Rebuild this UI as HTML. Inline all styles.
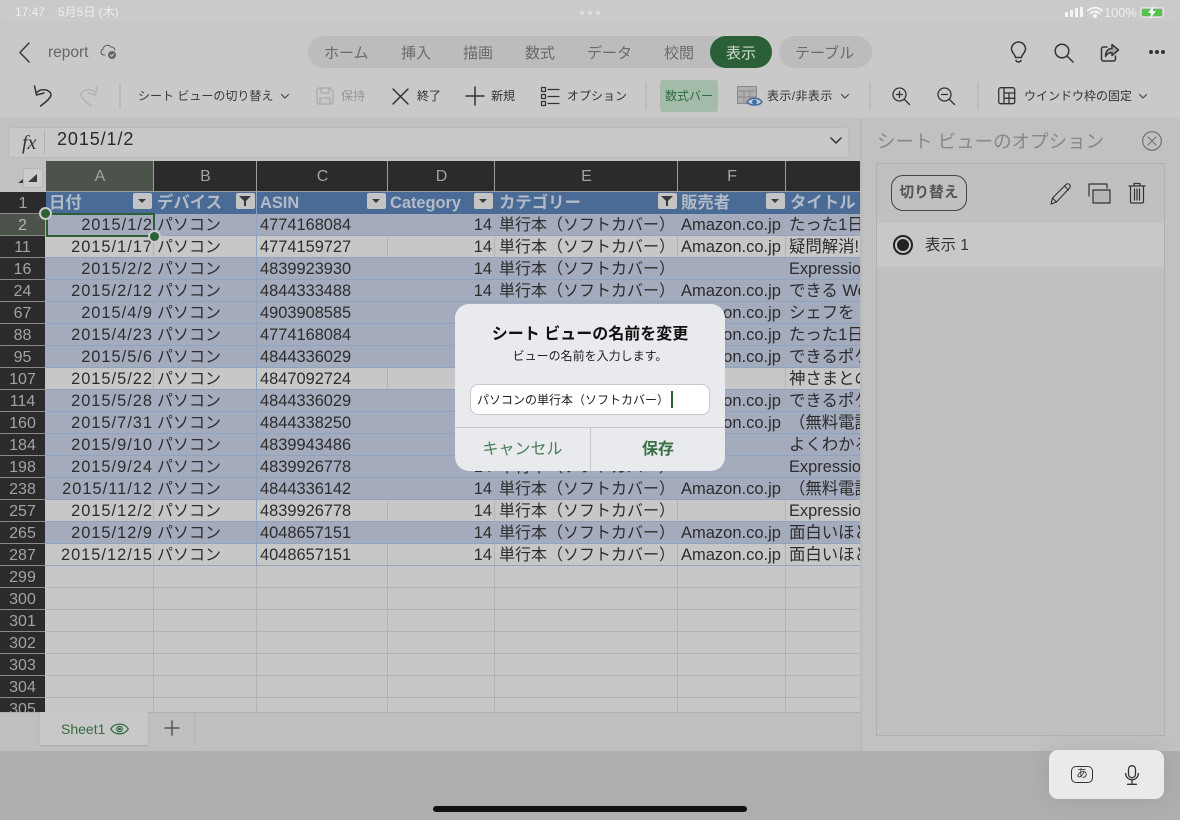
<!DOCTYPE html>
<html lang="ja"><head><meta charset="utf-8"><title>report</title>
<style>
*{box-sizing:border-box}
html,body{margin:0;padding:0}
body{width:1180px;height:820px;overflow:hidden;position:relative;background:#c9c9c9;font-family:"Liberation Sans","Noto Sans CJK JP",sans-serif;color:#2a2a2a}
.a{position:absolute;white-space:nowrap}
svg{position:absolute;overflow:visible;fill:none;stroke:#2e2e2e;stroke-width:1.5;stroke-linecap:round;stroke-linejoin:round}
.tab{position:absolute;top:45px;font-size:15px;color:#6a6a6a;line-height:17px;white-space:nowrap}
.tb{position:absolute;top:88px;font-size:12px;line-height:17px;color:#333;white-space:nowrap}
.vs{position:absolute;top:83px;width:1.5px;height:26px;background:#bbb}
.ch{position:absolute;top:161px;height:30px;background:#2b2b2b;color:#a3a3a3;font-size:16px;line-height:32px;text-align:center;border-right:1px solid #9c9c9c;padding-left:1px}
.r{position:absolute;left:0;width:860px;height:22px;font-size:16px;line-height:21px;border-bottom:1px solid #8ea3c0;color:#2d2d2d}
.r>*{position:absolute;top:1px;height:21px;white-space:nowrap;overflow:hidden;font-style:normal}
.r>:nth-child(1){left:0;top:0;width:45px;background:#2b2b2b;color:#a3a3a3;text-align:center;height:22px;line-height:23px;border-bottom:1px solid #8a8a8a}
.r>:nth-child(2){left:46px;width:107px;text-align:right;padding-right:0;font-size:16.4px;letter-spacing:1px}
.r>:nth-child(3){left:157px;width:99px}
.r>:nth-child(4){left:260px;width:127px;font-size:16.4px}
.r>:nth-child(5){left:388px;width:104px;text-align:right;font-size:16.4px}
.r>:nth-child(6){left:499px;width:178px}
.r>:nth-child(7){left:681px;width:104px;font-size:16.5px}
.r>:nth-child(8){left:789px;width:71px;font-size:16.4px}
.b{background:#a3abbd}
.l{background:#c7c7c7;border-bottom-color:#8ea3c0}
.l::before{content:"";position:absolute;top:0;left:153px;width:1px;height:21px;background:#b3b3b3;box-shadow:234px 0 #b3b3b3,341px 0 #b3b3b3,524px 0 #b3b3b3,632px 0 #b3b3b3}
.e{background:#c7c7c7;border-bottom-color:#b3b3b3}
.e::before{content:"";position:absolute;top:0;left:153px;width:1px;height:22px;background:#b3b3b3;box-shadow:103px 0 #b3b3b3,234px 0 #b3b3b3,341px 0 #b3b3b3,524px 0 #b3b3b3,632px 0 #b3b3b3}
.fb{position:absolute;top:193px;width:19px;height:16px;background:#c4c4c4;border-radius:2px}
.fb::after{content:"";position:absolute;left:5px;top:6px;border-left:4px solid transparent;border-right:4px solid transparent;border-top:4px solid #3a3a3a}
.fb.f::after{left:3px;top:3px;border-left:6px solid transparent;border-right:6px solid transparent;border-top:6px solid #3a3a3a}
.fb.f::before{content:"";position:absolute;left:8px;top:7px;width:2px;height:6px;background:#3a3a3a}
.ht{position:absolute;top:192px;height:22px;font-size:16.4px;line-height:22px;color:#b4bbc8;font-weight:bold;white-space:nowrap}
</style></head><body>

<!-- status bar -->
<div class="a" style="left:0;top:0;width:1180px;height:23px;background:#cacaca;border-bottom:1px dotted #c2c2c2"></div>
<div class="a" style="left:15px;top:5px;font-size:12px;line-height:15px;color:#eee">17:47</div>
<div class="a" style="left:58px;top:5px;font-size:12px;line-height:15px;color:#eee">5月5日 (木)</div>
<div class="a" style="left:580px;top:11px;width:4px;height:4px;border-radius:50%;background:#dedede;box-shadow:8px 0 #dedede,16px 0 #dedede"></div>
<div class="a" style="left:1065px;top:12px;width:3px;height:5px;background:#f4f4f4"></div>
<div class="a" style="left:1070px;top:10px;width:3px;height:7px;background:#f4f4f4"></div>
<div class="a" style="left:1075px;top:8px;width:3px;height:9px;background:#f4f4f4"></div>
<div class="a" style="left:1080px;top:7px;width:3px;height:10px;background:#f4f4f4"></div>
<svg style="left:1087px;top:6px;stroke:#f4f4f4;stroke-width:2" width="16" height="12"><path d="M1 4.500C5 .8 11 .8 15 4.500M3.500 7.300C6 5 10 5 12.500 7.300"/><circle cx="8" cy="10" r="1" fill="#f4f4f4"/></svg>
<div class="a" style="left:1104px;top:5px;font-size:12.800px;line-height:15px;color:#eee">100%</div>
<div class="a" style="left:1140px;top:7px;width:24px;height:11px;border:1px solid #e4e4e4;border-radius:3px;padding:1px"><div style="width:20px;height:7px;background:#58c04c;border-radius:1px"></div></div>
<svg style="left:1146px;top:6px;stroke:none" width="12" height="13"><path d="M7 0 2 7h3l-1 6 6-8H7z" fill="#f4f4f4"/></svg>

<!-- title row -->
<svg style="left:18px;top:42px;stroke:#3a3a3a" width="12" height="21"><path d="M11 1 2 10.500 11 20"/></svg>
<div class="a" style="left:48px;top:44px;font-size:15.500px;line-height:18px;color:#666">report</div>
<svg style="left:100px;top:44px;stroke:#5d5d5d;stroke-width:1" width="18" height="17"><path d="M5 11H4a3 3 0 0 1-1-5.800A4.500 4.500 0 0 1 11 3a4 4 0 0 1 4 3"/><circle cx="12" cy="11" r="4.500" fill="#666" stroke="#cbcbcb"/><path d="M10.300 11l1.300 1.300 2-2.300" stroke="#ccc"/></svg>

<div class="a" style="left:308px;top:36px;width:462px;height:32px;border-radius:16px;background:#bcbcbc"></div>
<div class="a" style="left:710px;top:36px;width:62px;height:32px;border-radius:16px;background:#2b6037"></div>
<div class="a" style="left:779px;top:36px;width:93px;height:32px;border-radius:16px;background:#bcbcbc"></div>
<div class="tab" style="left:324px">ホーム</div>
<div class="tab" style="left:401px">挿入</div>
<div class="tab" style="left:463px">描画</div>
<div class="tab" style="left:525px">数式</div>
<div class="tab" style="left:587px">データ</div>
<div class="tab" style="left:664px">校閲</div>
<div class="tab" style="left:726px;color:#cfdccf">表示</div>
<div class="tab" style="left:795px">テーブル</div>

<svg style="left:1010px;top:42px;stroke:#353535" width="17" height="21"><path d="M5.500 15.500C5 12 1.500 10.500 1.500 7a7 7 0 0 1 14 0c0 3.500-3.500 5-4 8.500zM6 18.500c.5 1 1 1.500 2.500 1.500s2-.5 2.500-1.500"/></svg>
<svg style="left:1054px;top:43px;stroke:#353535" width="20" height="20"><circle cx="8" cy="8" r="6.800"/><path d="M13 13l6 6"/></svg>
<svg style="left:1100px;top:43px;stroke:#353535" width="20" height="20"><path d="M7 4H3.500A2 2 0 0 0 1.500 6v10a2 2 0 0 0 2 2h10a2 2 0 0 0 2-2v-3"/><path d="M12 1.500 18.500 7 12 12.500V9.500c-3 0-5 1-6.500 4 0-5 2.500-8 6.500-8z" fill="#4a4a4a" fill-opacity=".25"/></svg>
<div class="a" style="left:1149px;top:50px;width:4px;height:4px;border-radius:50%;background:#333;box-shadow:6px 0 #333,12px 0 #333"></div>

<!-- toolbar -->
<svg style="left:33px;top:85px;stroke:#353535" width="20" height="22"><path d="M1.500 1 3.500 10 11 8"/><path d="M3.500 8C7 3.500 14 3.500 17.500 8 20 11.500 13 17 7.500 21"/></svg>
<svg style="left:79px;top:85px;stroke:#b3b3b3" width="20" height="22"><path d="M18.500 1 16.500 10 9 8"/><path d="M16.500 8C13 3.500 6 3.500 2.500 8 0 11.500 7 17 12.500 21"/></svg>
<div class="vs" style="left:119px"></div>
<div class="tb" style="left:138px;color:#3a3a3a">シート ビューの切り替え</div>
<svg style="left:281px;top:94px;stroke:#444;stroke-width:1.100" width="8" height="5"><path d="M.5.500 4 4 7.500.500"/></svg>
<svg style="left:316px;top:87px;stroke:#aaa;stroke-width:1.300" width="18" height="18"><path d="M1 3a2 2 0 0 1 2-2h11l3 3v11a2 2 0 0 1-2 2H3a2 2 0 0 1-2-2z"/><path d="M5 1v5h8V1M4 17v-6h10v6"/></svg>
<div class="tb" style="left:341px;color:#979797">保持</div>
<svg style="left:392px;top:88px;stroke:#333" width="17" height="17"><path d="M1 1l15 15M16 1 1 16"/></svg>
<div class="tb" style="left:417px">終了</div>
<svg style="left:466px;top:87px;stroke:#333" width="18" height="18"><path d="M9 0v18M0 9h18"/></svg>
<div class="tb" style="left:491px">新規</div>
<svg style="left:541px;top:87px;stroke:#333;stroke-width:1.200" width="19" height="19"><rect x=".5" y=".5" width="4" height="4"/><rect x=".5" y="7.500" width="4" height="4"/><rect x=".5" y="14.500" width="4" height="4"/><path d="M7 2.500h11M7 9.500h11M7 16.500h11"/></svg>
<div class="tb" style="left:567px">オプション</div>
<div class="vs" style="left:645px"></div>
<div class="a" style="left:660px;top:80px;width:58px;height:32px;background:#a3bcaa;border-radius:3px;font-size:12px;line-height:33px;text-align:center;color:#2f6c42">数式バー</div>
<svg style="left:737px;top:86px;stroke:#8a8a8a;stroke-width:1" width="26" height="21"><rect x=".5" y=".5" width="19" height="17" fill="#aeaeae"/><path d="M.5 5h19M7 5v13M13 5v13M.5 11h19"/><path d="M10 16c3-5 12-5 15 0-3 4-12 4-15 0z" fill="#cbcbcb" stroke="#3f6ea5" stroke-width="1.500"/><circle cx="17.500" cy="16" r="2.500" fill="#3f6ea5" stroke="none"/></svg>
<div class="tb" style="left:767px;letter-spacing:.4px">表示/非表示</div>
<svg style="left:841px;top:94px;stroke:#444;stroke-width:1.100" width="8" height="5"><path d="M.5.500 4 4 7.500.500"/></svg>
<div class="vs" style="left:869px"></div>
<svg style="left:892px;top:87px;stroke:#333;stroke-width:1.300" width="18" height="18"><circle cx="7.500" cy="7.500" r="6.500"/><path d="M12.500 12.500 17.500 17.500M7.500 4.500v6M4.500 7.500h6"/></svg>
<svg style="left:937px;top:87px;stroke:#333;stroke-width:1.300" width="18" height="18"><circle cx="7.500" cy="7.500" r="6.500"/><path d="M12.500 12.500 17.500 17.500M4.500 7.500h6"/></svg>
<div class="vs" style="left:977px"></div>
<svg style="left:998px;top:87px;stroke:#333;stroke-width:1.300" width="18" height="18"><rect x=".7" y=".7" width="16" height="16" rx="2"/><path d="M6 .7v16M6 6h10.700M11 6v10.700M6 11.300h10.700"/></svg>
<div class="tb" style="left:1024px">ウインドウ枠の固定</div>
<svg style="left:1139px;top:94px;stroke:#444;stroke-width:1.100" width="8" height="5"><path d="M.5.500 4 4 7.500.500"/></svg>

<!-- formula bar -->
<div class="a" style="left:0;top:118px;width:860px;height:43px;background:#c1c1c1"></div>
<div class="a" style="left:8px;top:127px;width:841px;height:31px;background:#c8c8c8;border:1px solid #bbb;border-radius:3px"></div>
<div class="a" style="left:22px;top:131px;font:italic 20px/24px 'Liberation Serif',serif;color:#333">fx</div>
<div class="a" style="left:44px;top:130px;width:1px;height:25px;background:#b3b3b3"></div>
<div class="a" style="left:57px;top:128px;font-size:18px;line-height:22px;letter-spacing:.9px;color:#2a2a2a">2015/1/2</div>
<svg style="left:830px;top:137px;stroke:#333" width="12" height="8"><path d="M1 1l5 5 5-5"/></svg>

<!-- grid head -->
<div class="a" style="left:0;top:161px;width:46px;height:31px;background:#c2c2c2"></div>
<div class="a" style="left:23px;top:168px;width:20px;height:20px;background:#cbcbcb;border:1px solid #b6b6b6;border-radius:2px"></div>
<div class="a" style="left:28px;top:174px;border-left:9px solid transparent;border-bottom:8px solid #3a3a3a"></div>
<div class="a" style="left:18px;top:179px;border-left:5px solid transparent;border-bottom:4px solid #3a3a3a"></div>
<div class="ch" style="left:46px;width:108px;background:#4b534a">A</div>
<div class="ch" style="left:154px;width:103px">B</div>
<div class="ch" style="left:257px;width:131px">C</div>
<div class="ch" style="left:388px;width:107px">D</div>
<div class="ch" style="left:495px;width:183px">E</div>
<div class="ch" style="left:678px;width:108px">F</div>
<div class="ch" style="left:786px;width:74px;border-right:0"></div>
<div class="a" style="left:46px;top:191px;width:814px;height:1px;background:#9c9c9c"></div>

<!-- rows -->
<div class="a" style="left:0;top:192px;width:46px;height:22px;background:#2b2b2b;color:#a3a3a3;font-size:16px;line-height:23px;text-align:center;border-bottom:1px solid #8a8a8a">1</div>
<div class="a" style="left:46px;top:192px;width:814px;height:22px;background:#4a6b96"></div>
<div class="ht" style="left:49px">日付</div>
<div class="ht" style="left:157px">デバイス</div>
<div class="ht" style="left:260px">ASIN</div>
<div class="ht" style="left:390px">Category</div>
<div class="ht" style="left:499px">カテゴリー</div>
<div class="ht" style="left:681px">販売者</div>
<div class="ht" style="left:790px">タイトル</div>
<div class="fb" style="left:133px"></div>
<div class="fb f" style="left:236px"></div>
<div class="fb" style="left:367px"></div>
<div class="fb" style="left:474px"></div>
<div class="fb f" style="left:658px"></div>
<div class="fb" style="left:766px"></div>

<div class="r b" style="top:214px"><i style="background:#4b534a;color:#b3b8b2">2</i><i>2015/1/2</i><i>パソコン</i><i>4774168084</i><i>14</i><i>単行本（ソフトカバー）</i><i>Amazon.co.jp</i><i>たった1日</i></div>
<div class="r l" style="top:236px"><i>11</i><i>2015/1/17</i><i>パソコン</i><i>4774159727</i><i>14</i><i>単行本（ソフトカバー）</i><i>Amazon.co.jp</i><i>疑問解消!</i></div>
<div class="r b" style="top:258px"><i>16</i><i>2015/2/2</i><i>パソコン</i><i>4839923930</i><i>14</i><i>単行本（ソフトカバー）</i><i></i><i>Expressio</i></div>
<div class="r b" style="top:280px"><i>24</i><i>2015/2/12</i><i>パソコン</i><i>4844333488</i><i>14</i><i>単行本（ソフトカバー）</i><i>Amazon.co.jp</i><i>できる We</i></div>
<div class="r b" style="top:302px"><i>67</i><i>2015/4/9</i><i>パソコン</i><i>4903908585</i><i>14</i><i>単行本（ソフトカバー）</i><i>Amazon.co.jp</i><i>シェフを</i></div>
<div class="r b" style="top:324px"><i>88</i><i>2015/4/23</i><i>パソコン</i><i>4774168084</i><i>14</i><i>単行本（ソフトカバー）</i><i>Amazon.co.jp</i><i>たった1日</i></div>
<div class="r b" style="top:346px"><i>95</i><i>2015/5/6</i><i>パソコン</i><i>4844336029</i><i>14</i><i>単行本（ソフトカバー）</i><i>Amazon.co.jp</i><i>できるポケ</i></div>
<div class="r l" style="top:368px"><i>107</i><i>2015/5/22</i><i>パソコン</i><i>4847092724</i><i>14</i><i>単行本（ソフトカバー）</i><i></i><i>神さまとの</i></div>
<div class="r b" style="top:390px"><i>114</i><i>2015/5/28</i><i>パソコン</i><i>4844336029</i><i>14</i><i>単行本（ソフトカバー）</i><i>Amazon.co.jp</i><i>できるポケ</i></div>
<div class="r b" style="top:412px"><i>160</i><i>2015/7/31</i><i>パソコン</i><i>4844338250</i><i>14</i><i>単行本（ソフトカバー）</i><i>Amazon.co.jp</i><i>（無料電話</i></div>
<div class="r b" style="top:434px"><i>184</i><i>2015/9/10</i><i>パソコン</i><i>4839943486</i><i>14</i><i>単行本（ソフトカバー）</i><i></i><i>よくわかる</i></div>
<div class="r b" style="top:456px"><i>198</i><i>2015/9/24</i><i>パソコン</i><i>4839926778</i><i>14</i><i>単行本（ソフトカバー）</i><i></i><i>Expressio</i></div>
<div class="r b" style="top:478px"><i>238</i><i>2015/11/12</i><i>パソコン</i><i>4844336142</i><i>14</i><i>単行本（ソフトカバー）</i><i>Amazon.co.jp</i><i>（無料電話</i></div>
<div class="r l" style="top:500px"><i>257</i><i>2015/12/2</i><i>パソコン</i><i>4839926778</i><i>14</i><i>単行本（ソフトカバー）</i><i></i><i>Expressio</i></div>
<div class="r b" style="top:522px"><i>265</i><i>2015/12/9</i><i>パソコン</i><i>4048657151</i><i>14</i><i>単行本（ソフトカバー）</i><i>Amazon.co.jp</i><i>面白いほど</i></div>
<div class="r l" style="top:544px"><i>287</i><i>2015/12/15</i><i>パソコン</i><i>4048657151</i><i>14</i><i>単行本（ソフトカバー）</i><i>Amazon.co.jp</i><i>面白いほど</i></div>
<div class="r e" style="top:566px"><i>299</i></div>
<div class="r e" style="top:588px"><i>300</i></div>
<div class="r e" style="top:610px"><i>301</i></div>
<div class="r e" style="top:632px"><i>302</i></div>
<div class="r e" style="top:654px"><i>303</i></div>
<div class="r e" style="top:676px"><i>304</i></div>
<div class="r e" style="top:698px;height:14px;border-bottom:0;overflow:hidden"><i>305</i></div>
<div class="a" style="left:256px;top:192px;width:1px;height:374px;background:#8ea3c0"></div>

<!-- selection -->
<div class="a" style="left:46px;top:213px;width:109px;height:24px;border:2px solid #2b6037"></div>
<div class="a" style="left:39px;top:207px;width:13px;height:13px;border-radius:50%;background:#2b6037;border:2px solid #c9c9c9"></div>
<div class="a" style="left:148px;top:230px;width:13px;height:13px;border-radius:50%;background:#2b6037;border:2px solid #c9c9c9"></div>

<!-- sheet tabs -->
<div class="a" style="left:0;top:712px;width:860px;height:39px;background:#bfbfbf;border-top:1px solid #aeaeae"></div>
<div class="a" style="left:40px;top:712px;width:108px;height:33px;background:#c8c8c8;box-shadow:0 1px 1px #a8a8a8"></div>
<div class="a" style="left:61px;top:721px;font-size:14px;line-height:17px;color:#346c43">Sheet1</div>
<svg style="left:110px;top:723px;stroke:#346c43;stroke-width:1.200" width="19" height="12"><path d="M.7 6c4-6.500 13.600-6.500 17.600 0-4 6.500-13.600 6.500-17.600 0z"/><circle cx="9.500" cy="6" r="2.700"/><circle cx="9.500" cy="6" r=".8" fill="#346c43"/></svg>
<svg style="left:165px;top:721px;stroke:#555" width="14" height="14"><path d="M7 0v14M0 7h14"/></svg>
<div class="a" style="left:194px;top:712px;width:1px;height:33px;background:#b3b3b3"></div>

<!-- side panel -->
<div class="a" style="left:860px;top:118px;width:320px;height:633px;background:#c1c1c1;border-left:2px solid #b9b9b9"></div>
<div class="a" style="left:877px;top:131px;font-size:18.500px;line-height:22px;color:#888">シート ビューのオプション</div>
<svg style="left:1142px;top:131px;stroke:#6d6d6d;stroke-width:1.100" width="20" height="20"><circle cx="10" cy="10" r="9.300"/><path d="M6 6l8 8M14 6l-8 8"/></svg>
<div class="a" style="left:876px;top:163px;width:289px;height:573px;background:#c0c0c0;border:1px solid #b0b0b0"></div>
<div class="a" style="left:877px;top:223px;width:287px;height:44px;background:#c8c8c8"></div>
<div class="a" style="left:891px;top:175px;width:76px;height:36px;border:1px solid #444;border-radius:12px;font-size:14.800px;line-height:34px;text-align:center;font-weight:bold;color:#555">切り替え</div>
<svg style="left:1050px;top:182px;stroke:#333;stroke-width:1.100" width="22" height="23"><path d="M1 22l1.500-6L16 2.500c1-1 2.500-1 3.500 0s1 2.500 0 3.500L6.500 20z"/><path d="M2.500 16 6.500 20M14.500 4l4 4"/></svg>
<svg style="left:1088px;top:183px;stroke:#333;stroke-width:1.200" width="23" height="21"><path d="M1 13V1h18v4"/><rect x="5" y="7" width="17" height="13" fill="#b6b6b6"/></svg>
<svg style="left:1128px;top:182px;stroke:#333;stroke-width:1.200" width="18" height="22"><path d="M1 4h16M6 4V1.500h6V4M2.500 4v16a1 1 0 0 0 1 1h11a1 1 0 0 0 1-1V4M6.500 7v11M9 7v11M11.500 7v11"/></svg>
<div class="a" style="left:893px;top:235px;width:20px;height:20px;border-radius:50%;border:2px solid #222"></div>
<div class="a" style="left:897px;top:239px;width:12px;height:12px;border-radius:50%;background:#222"></div>
<div class="a" style="left:925px;top:236px;font-size:15.500px;line-height:19px;color:#333">表示 1</div>

<!-- bottom -->
<div class="a" style="left:0;top:751px;width:1180px;height:69px;background:#aeaeae"></div>
<div class="a" style="left:1049px;top:750px;width:115px;height:49px;background:#e9eaec;border-radius:9px;box-shadow:0 0 24px rgba(0,0,0,.08)"></div>
<div class="a" style="left:1071px;top:766px;width:22px;height:17px;border:1.500px solid #333;border-radius:5px;font-size:11.500px;line-height:14px;text-align:center;color:#333">あ</div>
<svg style="left:1125px;top:765px;stroke:#333;stroke-width:1.300" width="14" height="20"><rect x="3.500" y=".7" width="7" height="12" rx="3.500"/><path d="M.7 8.500a6.300 6.300 0 0 0 12.600 0M7 15v4M2.500 19.300h9"/></svg>
<div class="a" style="left:433px;top:806px;width:314px;height:6px;border-radius:3px;background:#111"></div>

<!-- dialog -->
<div class="a" style="left:455px;top:304px;width:270px;height:167px;background:#e9eaee;border-radius:14px"></div>
<div class="a" style="left:455px;top:325px;width:270px;text-align:center;font-size:16px;line-height:19px;font-weight:bold;color:#111">シート ビューの名前を変更</div>
<div class="a" style="left:455px;top:348px;width:270px;text-align:center;font-size:12px;line-height:16px;color:#222">ビューの名前を入力します。</div>
<div class="a" style="left:470px;top:384px;width:240px;height:31px;background:#fff;border:1px solid #c8c9cd;border-radius:8px"></div>
<div class="a" style="left:477px;top:392px;font-size:12px;line-height:17px;color:#222">パソコンの単行本（ソフトカバー）</div>
<div class="a" style="left:671px;top:391px;width:2px;height:17px;background:#2b6037"></div>
<div class="a" style="left:455px;top:427px;width:270px;height:1px;background:#c7c8cc"></div>
<div class="a" style="left:590px;top:428px;width:1px;height:43px;background:#c7c8cc"></div>
<div class="a" style="left:455px;top:440px;width:135px;text-align:center;font-size:16px;line-height:20px;color:#4c7d5a">キャンセル</div>
<div class="a" style="left:591px;top:440px;width:134px;text-align:center;font-size:16px;line-height:20px;font-weight:bold;color:#3a7048">保存</div>
</body></html>
